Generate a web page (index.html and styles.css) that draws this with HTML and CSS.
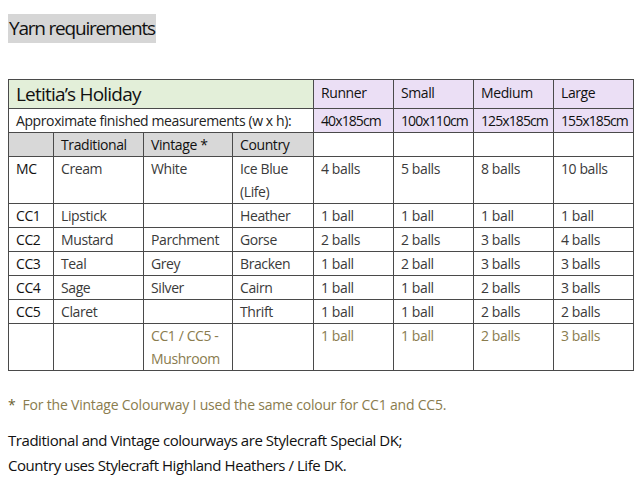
FILE: index.html
```html
<!DOCTYPE html>
<html>
<head>
<meta charset="utf-8">
<link rel="stylesheet" href="styles.css">
</head>
<body>
<div class="page">
  <h1 class="heading">Yarn requirements</h1>
  <table class="yarn">
    <colgroup>
      <col class="c-code"><col class="c-trad"><col class="c-vint"><col class="c-country">
      <col class="c-size"><col class="c-size"><col class="c-size"><col class="c-size">
    </colgroup>
    <tr class="r-title">
      <td colspan="4" class="title">Letitia’s Holiday</td>
      <td class="size">Runner</td><td class="size">Small</td><td class="size">Medium</td><td class="size">Large</td>
    </tr>
    <tr>
      <td colspan="4" class="label">Approximate finished measurements (w x h):</td>
      <td class="size dim">40x185cm</td><td class="size dim">100x110cm</td><td class="size dim">125x185cm</td><td class="size dim">155x185cm</td>
    </tr>
    <tr class="r-head">
      <td class="grey"></td><td class="grey hd">Traditional</td><td class="grey hd">Vintage *</td><td class="grey hd">Country</td>
      <td></td><td></td><td></td><td></td>
    </tr>
    <tr>
      <td class="code">MC</td><td>Cream</td><td>White</td><td>Ice Blue<br>(Life)</td>
      <td>4 balls</td><td>5 balls</td><td>8 balls</td><td>10 balls</td>
    </tr>
    <tr>
      <td class="code">CC1</td><td>Lipstick</td><td></td><td>Heather</td>
      <td>1 ball</td><td>1 ball</td><td>1 ball</td><td>1 ball</td>
    </tr>
    <tr>
      <td class="code">CC2</td><td>Mustard</td><td>Parchment</td><td>Gorse</td>
      <td>2 balls</td><td>2 balls</td><td>3 balls</td><td>4 balls</td>
    </tr>
    <tr>
      <td class="code">CC3</td><td>Teal</td><td>Grey</td><td>Bracken</td>
      <td>1 ball</td><td>2 ball</td><td>3 balls</td><td>3 balls</td>
    </tr>
    <tr>
      <td class="code">CC4</td><td>Sage</td><td>Silver</td><td>Cairn</td>
      <td>1 ball</td><td>1 ball</td><td>2 balls</td><td>3 balls</td>
    </tr>
    <tr>
      <td class="code">CC5</td><td>Claret</td><td></td><td>Thrift</td>
      <td>1 ball</td><td>1 ball</td><td>2 balls</td><td>2 balls</td>
    </tr>
    <tr class="r-last">
      <td></td><td></td><td class="olive">CC1 / CC5 -<br>Mushroom</td><td></td>
      <td class="olive">1 ball</td><td class="olive">1 ball</td><td class="olive">2 balls</td><td class="olive">3 balls</td>
    </tr>
  </table>
  <p class="note"><span class="star">*</span>For the Vintage Colourway I used the same colour for CC1 and CC5.</p>
  <p class="info">Traditional and Vintage colourways are Stylecraft Special DK;<br>Country uses Stylecraft Highland Heathers / Life DK.</p>
</div>
</body>
</html>
```

FILE: styles.css
```css
html, body {
  margin: 0;
  padding: 0;
  background: #ffffff;
}
body {
  font-family: "Open Sans", "Noto Sans", sans-serif;
  color: #111;
}
.page {
  padding: 14px 8px 0 8px;
}
.heading {
  display: inline-block;
  margin: 0;
  background: #d6d6d6;
  font-size: 19px;
  font-weight: 400;
  line-height: 29px;
  height: 29px;
  padding: 0 1px 0 1px;
  letter-spacing: -1.2px;
  color: #111;
}
.yarn {
  margin-top: 36px;
  border-collapse: collapse;
  table-layout: fixed;
  width: 624px;
  border: 1px solid #666;
  font-size: 14px;
  letter-spacing: -0.4px;
}
.c-code { width: 45px; }
.c-trad { width: 90px; }
.c-vint { width: 89px; }
.c-country { width: 81px; }
.c-size { width: 80px; }
.yarn td {
  border: 1px solid #4a4a4a;
  padding: 0 2px 0 7px;
  height: 23px;
  line-height: 23px;
  vertical-align: top;
  color: #3a3a3a;
  white-space: nowrap;
  overflow: hidden;
}
.yarn .r-title td {
  height: 28px;
  line-height: 26px;
}
.yarn td.title {
  background: #e3efd9;
  font-size: 19px;
  color: #111;
  letter-spacing: -0.8px;
  line-height: 28px;
}
.yarn td.size {
  background: #ebdff5;
  color: #111;
}
.yarn td.dim {
  letter-spacing: -0.9px;
}
.yarn td.label {
  color: #222;
}
.yarn td.grey {
  background: #d8d8d8;
}
.yarn td.hd {
  color: #111;
}
.yarn td.code {
  color: #111;
}
.yarn .r-last td {
  height: 45px;
}
.yarn td.olive {
  color: #8a7c4e;
}
.note {
  margin: 22px 0 0 0;
  font-size: 14px;
  color: #8a7c4e;
  letter-spacing: -0.2px;
  line-height: 24px;
}
.star {
  margin-right: 7px;
  color: #6b5f30;
}
.info {
  margin: 11px 0 0 0;
  font-size: 15px;
  color: #111;
  letter-spacing: -0.45px;
  line-height: 25px;
}
```
